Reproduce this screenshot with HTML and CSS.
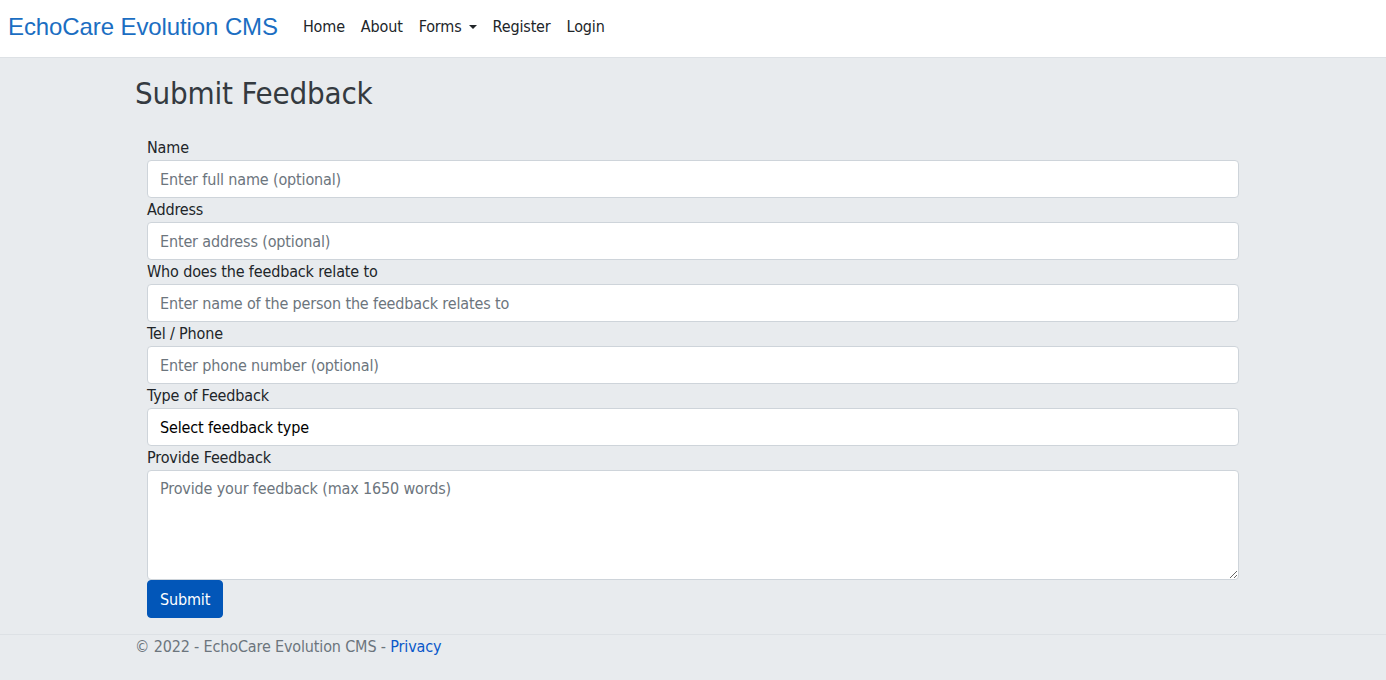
FILE: index.html
```html
<!DOCTYPE html>
<html lang="en">
<head>
<meta charset="utf-8">
<title>Submit Feedback - EchoCare Evolution CMS</title>
<link rel="stylesheet" href="styles.css">
</head>
<body>
<header class="navbar">
  <a class="brand" href="#">EchoCare Evolution CMS</a>
  <nav class="nav">
    <a class="nav-link" href="#">Home</a>
    <a class="nav-link" href="#">About</a>
    <a class="nav-link dropdown" href="#">Forms <span class="caret"></span></a>
    <a class="nav-link" href="#">Register</a>
    <a class="nav-link" href="#">Login</a>
  </nav>
</header>
<main class="container">
  <h1 class="title">Submit Feedback</h1>
  <form class="form">
    <div class="group">
      <label class="label">Name</label>
      <input class="control" type="text" placeholder="Enter full name (optional)">
    </div>
    <div class="group">
      <label class="label">Address</label>
      <input class="control" type="text" placeholder="Enter address (optional)">
    </div>
    <div class="group">
      <label class="label">Who does the feedback relate to</label>
      <input class="control" type="text" placeholder="Enter name of the person the feedback relates to">
    </div>
    <div class="group">
      <label class="label">Tel / Phone</label>
      <input class="control" type="text" placeholder="Enter phone number (optional)">
    </div>
    <div class="group">
      <label class="label">Type of Feedback</label>
      <div class="control select">Select feedback type</div>
    </div>
    <div class="group">
      <label class="label">Provide Feedback</label>
      <textarea class="control textarea" placeholder="Provide your feedback (max 1650 words)"></textarea>
    </div>
    <button class="btn" type="button">Submit</button>
  </form>
</main>
<footer class="footer">
  <div class="footer-inner">© 2022 - EchoCare Evolution CMS - <a href="#" class="privacy">Privacy</a></div>
</footer>
</body>
</html>
```

FILE: styles.css
```css
* { box-sizing: border-box; }
html, body { margin: 0; padding: 0; }
body {
  background: #e8ebee;
  font-family: "DejaVu Sans Condensed", "DejaVu Sans", sans-serif;
  font-size: 16px;
  letter-spacing: -0.15px;
  color: #212529;
  height: 680px;
  overflow: hidden;
}
.navbar {
  background: #fff;
  height: 58px;
  border-bottom: 1px solid #dde1e5;
  display: flex;
  align-items: center;
  padding: 0 8px 4px;
}
.brand {
  font-family: "Liberation Sans", Arial, sans-serif;
  font-size: 24px;
  letter-spacing: -0.1px;
  color: #1b6ec2;
  text-decoration: none;
  margin-right: 17px;
}
.nav { display: flex; }
.nav-link {
  color: #212529;
  text-decoration: none;
  padding: 8px;
  font-size: 16px;
  display: flex;
  align-items: center;
}
.caret {
  display: inline-block;
  width: 0; height: 0;
  margin-left: 7px;
  border-top: 4px solid #212529;
  border-left: 4px solid transparent;
  border-right: 4px solid transparent;
}
.container {
  width: 1140px;
  margin: 0 auto;
  padding: 0 12px;
}
.title {
  font-size: 31px;
  letter-spacing: -0.2px;
  margin: 0;
  padding-top: 13px;
  line-height: 44px;
  color: #343a40;
  font-weight: normal;
}
.form {
  padding: 0 12px;
  margin-top: 21px;
}
.group { display: flex; flex-direction: column; }
.label {
  line-height: 24px;
  height: 24px;
  color: #212529;
}
.control {
  width: 100%;
  height: 38px;
  border: 1px solid #ced4da;
  border-radius: 4px;
  background: #fff;
  padding: 6px 12px;
  font-family: inherit;
  font-size: 16px;
  letter-spacing: -0.15px;
  color: #212529;
  outline: none;
}
.control::placeholder { color: #6c757d; opacity: 1; }
.select { display: flex; align-items: center; color: #000; }
.textarea { height: 110px; resize: vertical; display: block; line-height: 24px; padding-top: 6px; }
.btn {
  height: 38px;
  padding: 6px 12px;
  background: #0256b8;
  color: #fff;
  border: 1px solid #0256b8;
  border-radius: 4px;
  font-family: inherit;
  font-size: 16px;
  letter-spacing: -0.15px;
}
.footer {
  margin-top: 16px;
  border-top: 1px solid #dde1e5;
}
.footer-inner {
  width: 1140px;
  margin: 0 auto;
  padding: 0 12px;
  line-height: 24px;
  color: #6c757d;
}
.privacy { color: #0a58ca; text-decoration: none; }
```
